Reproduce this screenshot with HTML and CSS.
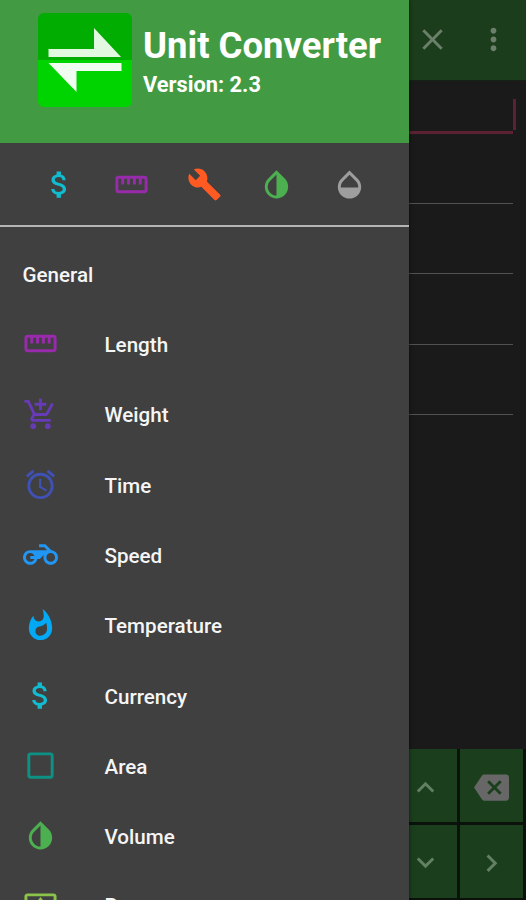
FILE: index.html
```html
<!DOCTYPE html>
<html lang="en">
<head>
<meta charset="utf-8">
<title>Unit Converter</title>
<link rel="stylesheet" href="styles.css">
</head>
<body>
<svg class="defs" aria-hidden="true">
  <symbol id="money" viewBox="0 0 24 24"><path d="M11.8 10.9c-2.27-.59-3-1.2-3-2.15 0-1.09 1.01-1.85 2.7-1.85 1.78 0 2.44.85 2.5 2.1h2.21c-.07-1.72-1.12-3.3-3.21-3.81V3h-3v2.16c-1.94.42-3.5 1.68-3.5 3.61 0 2.31 1.91 3.46 4.7 4.13 2.5.6 3 1.48 3 2.41 0 .69-.49 1.79-2.7 1.79-2.06 0-2.87-.92-2.98-2.1h-2.2c.12 2.19 1.76 3.42 3.68 3.83V21h3v-2.15c1.95-.37 3.5-1.5 3.5-3.55 0-2.84-2.43-3.81-4.7-4.4z"/></symbol>
  <symbol id="ruler" viewBox="0 0 24 24"><path d="M21 6H3c-1.1 0-2 .9-2 2v8c0 1.1.9 2 2 2h18c1.1 0 2-.9 2-2V8c0-1.1-.9-2-2-2zm0 10H3V8h2v4h2V8h2v4h2V8h2v4h2V8h2v4h2V8h2v8z"/></symbol>
  <symbol id="wrench" viewBox="0 0 24 24"><path d="M22.7 19l-9.1-9.1c.9-2.3.4-5-1.5-6.9-2-2-5-2.4-7.4-1.3L9 6 6 9 1.6 4.7C.4 7.1.9 10.1 2.9 12.1c1.9 1.9 4.6 2.4 6.9 1.5l9.1 9.1c.4.4 1 .4 1.4 0l2.3-2.3c.5-.4.5-1.1.1-1.4z"/></symbol>
  <symbol id="drop" viewBox="0 0 24 24"><path d="M17.66 7.93L12 2.27 6.34 7.93c-3.12 3.12-3.12 8.19 0 11.31C7.9 20.8 9.95 21.58 12 21.58c2.05 0 4.1-.78 5.66-2.34 3.12-3.12 3.12-8.19 0-11.31zM12 19.59c-1.6 0-3.11-.62-4.24-1.76C6.62 16.69 6 15.19 6 13.59s.62-3.11 1.76-4.24L12 5.1v14.49z"/></symbol>
  <symbol id="opacity" viewBox="0 0 24 24"><path d="M17.66 8L12 2.35 6.34 8C4.78 9.56 4 11.64 4 13.64s.78 4.11 2.34 5.67 3.61 2.35 5.66 2.35 4.1-.79 5.66-2.35S20 15.64 20 13.64 19.22 9.56 17.66 8zM6 14c.01-2 .62-3.27 1.76-4.4L12 5.27l4.24 4.38C17.38 10.77 17.99 12 18 14H6z"/></symbol>
  <symbol id="cart" viewBox="0 0 24 24"><path d="M11 9h2V6h3V4h-3V1h-2v3H8v2h3v3zm-4 9c-1.1 0-1.99.9-1.99 2S5.9 22 7 22s2-.9 2-2-.9-2-2-2zm10 0c-1.1 0-1.99.9-1.99 2s.89 2 1.99 2 2-.9 2-2-.9-2-2-2zm-9.83-3.25l.03-.12.9-1.63h7.45c.75 0 1.41-.41 1.75-1.03l3.86-7.01L19.42 4h-.01l-1.1 2-2.76 5H8.53l-.13-.27L6.16 6l-.95-2-.94-2H1v2h2l3.6 7.59-1.35 2.45c-.16.28-.25.61-.25.96 0 1.1.9 2 2 2h12v-2H7.42c-.13 0-.25-.11-.25-.25z"/></symbol>
  <symbol id="alarm" viewBox="0 0 24 24"><path d="M22 5.72l-4.6-3.86-1.29 1.53 4.6 3.86L22 5.72zM7.88 3.39L6.6 1.86 2 5.71l1.29 1.53 4.59-3.85zM12.5 8H11v6l4.75 2.85.75-1.23-4-2.37V8zM12 4c-4.97 0-9 4.03-9 9s4.02 9 9 9c4.97 0 9-4.03 9-9s-4.03-9-9-9zm0 16c-3.87 0-7-3.13-7-7s3.13-7 7-7 7 3.13 7 7-3.13 7-7 7z"/></symbol>
  <symbol id="bike" viewBox="0 0 24 24"><path d="M19.44 9.03L15.41 5H11v2h3.59l2 2H5c-2.8 0-5 2.2-5 5s2.2 5 5 5c2.46 0 4.45-1.69 4.9-4h1.65l2.77-2.77c-.21.54-.32 1.14-.32 1.77 0 2.8 2.2 5 5 5s5-2.2 5-5c0-2.65-1.97-4.77-4.56-4.97zM7.82 15C7.4 16.15 6.28 17 5 17c-1.63 0-3-1.37-3-3s1.37-3 3-3c1.28 0 2.4.85 2.82 2H5v2h2.82zM19 17c-1.66 0-3-1.34-3-3s1.34-3 3-3 3 1.34 3 3-1.34 3-3 3z"/></symbol>
  <symbol id="flame" viewBox="0 0 24 24"><path d="M13.5.67s.74 2.65.74 4.8c0 2.06-1.35 3.73-3.41 3.73-2.07 0-3.63-1.67-3.63-3.73l.03-.36C5.21 7.51 4 10.62 4 14c0 4.42 3.58 8 8 8s8-3.58 8-8C20 8.61 17.41 3.8 13.5.67zM11.71 19c-1.78 0-3.22-1.4-3.22-3.14 0-1.62 1.05-2.76 2.81-3.12 1.77-.36 3.6-1.21 4.62-2.58.39 1.29.59 2.65.59 4.04 0 2.65-2.15 4.8-4.8 4.8z"/></symbol>
  <symbol id="square" viewBox="0 0 24 24"><path d="M19 5v14H5V5h14m0-2H5c-1.1 0-2 .9-2 2v14c0 1.1.9 2 2 2h14c1.1 0 2-.9 2-2V5c0-1.1-.9-2-2-2z"/></symbol>
  <symbol id="overscan" viewBox="0 0 24 24"><path d="M12.01 5.5L10 8h4l-1.99-2.5zM18 10v4l2.5-1.99L18 10zM6 10l-2.5 2.01L6 14v-4zm8 6h-4l2.01 2.5L14 16zm7-13H3c-1.1 0-2 .9-2 2v14c0 1.1.9 2 2 2h18c1.1 0 2-.9 2-2V5c0-1.1-.9-2-2-2zm0 16.01H3V4.99h18v14.02z"/></symbol>
  <symbol id="close" viewBox="0 0 24 24"><path d="M19 6.41L17.59 5 12 10.59 6.41 5 5 6.41 10.59 12 5 17.59 6.41 19 12 13.41 17.59 19 19 17.59 13.41 12z"/></symbol>
  <symbol id="more" viewBox="0 0 24 24"><path d="M12 8c1.1 0 2-.9 2-2s-.9-2-2-2-2 .9-2 2 .9 2 2 2zm0 2c-1.1 0-2 .9-2 2s.9 2 2 2 2-.9 2-2-.9-2-2-2zm0 6c-1.1 0-2 .9-2 2s.9 2 2 2 2-.9 2-2-.9-2-2-2z"/></symbol>
  <symbol id="up" viewBox="0 0 24 24"><path d="M7.41 15.41L12 10.83l4.59 4.58L18 14l-6-6-6 6z"/></symbol>
  <symbol id="down" viewBox="0 0 24 24"><path d="M7.41 7.84L12 12.42l4.59-4.58L18 9.25l-6 6-6-6z"/></symbol>
  <symbol id="next" viewBox="0 0 24 24"><path d="M8.59 16.34l4.58-4.59-4.58-4.59L10 5.75l6 6-6 6z"/></symbol>
  <symbol id="backspace" viewBox="0 0 24 24"><path d="M22 3H7c-.69 0-1.23.35-1.59.88L0 12l5.41 8.11c.36.53.9.89 1.59.89h15c1.1 0 2-.9 2-2V5c0-1.1-.9-2-2-2zm-3 12.59L17.59 17 14 13.41 10.41 17 9 15.59 12.59 12 9 8.41 10.41 7 14 10.59 17.59 7 19 8.41 15.41 12 19 15.59z"/></symbol>
</svg>

<div class="app">
  <main class="converter">
    <header class="toolbar">
      <svg class="icon"><use href="#close"/></svg>
      <svg class="icon"><use href="#more"/></svg>
    </header>
    <div class="fields">
      <div class="field active"><span class="caret"></span></div>
      <div class="field"></div>
      <div class="field"></div>
      <div class="field"></div>
      <div class="field"></div>
    </div>
    <div class="keypad">
      <div class="key"><svg class="icon"><use href="#up"/></svg></div>
      <div class="key"><svg class="icon erase"><use href="#backspace"/></svg></div>
      <div class="key"><svg class="icon"><use href="#down"/></svg></div>
      <div class="key"><svg class="icon"><use href="#next"/></svg></div>
    </div>
  </main>

  <aside class="drawer">
    <header class="brand">
      <svg class="logo" viewBox="0 0 94 94">
        <defs><clipPath id="tile"><rect width="94" height="94" rx="6"/></clipPath></defs>
        <g clip-path="url(#tile)">
          <rect width="94" height="47" fill="#00ad00"/>
          <rect y="47" width="94" height="47" fill="#00d400"/>
        </g>
        <path fill="#e3f8e0" d="M10.5 36H56V15l27 29H10.500z"/>
        <path fill="#f0fdf0" d="M10.500 50H83.500v8H38.500v21z"/>
      </svg>
      <div class="names">
        <h1>Unit Converter</h1>
        <p>Version: 2.3</p>
      </div>
    </header>
    <nav class="tabs">
      <svg class="icon cyan"><use href="#money"/></svg>
      <svg class="icon purple"><use href="#ruler"/></svg>
      <svg class="icon orange"><use href="#wrench"/></svg>
      <svg class="icon green"><use href="#drop"/></svg>
      <svg class="icon grey"><use href="#opacity"/></svg>
    </nav>
    <h2>General</h2>
    <ul class="menu">
      <li><svg class="icon purple"><use href="#ruler"/></svg><span>Length</span></li>
      <li><svg class="icon violet"><use href="#cart"/></svg><span>Weight</span></li>
      <li><svg class="icon indigo"><use href="#alarm"/></svg><span>Time</span></li>
      <li><svg class="icon blue"><use href="#bike"/></svg><span>Speed</span></li>
      <li><svg class="icon sky"><use href="#flame"/></svg><span>Temperature</span></li>
      <li><svg class="icon cyan"><use href="#money"/></svg><span>Currency</span></li>
      <li><svg class="icon teal"><use href="#square"/></svg><span>Area</span></li>
      <li><svg class="icon green"><use href="#drop"/></svg><span>Volume</span></li>
      <li><svg class="icon lime"><use href="#overscan"/></svg><span>Pressure</span></li>
    </ul>
  </aside>
</div>
</body>
</html>
```
FILE: styles.css
```css
* { box-sizing: border-box; margin: 0; padding: 0; }

body {
  width: 526px;
  height: 900px;
  overflow: hidden;
  background: #1a1a1a;
  font-family: Roboto, "Liberation Sans", sans-serif;
}

.defs { position: absolute; width: 0; height: 0; }

.app { position: relative; width: 526px; height: 900px; overflow: hidden; }

.icon { display: block; flex: none; width: 35px; height: 35px; fill: currentColor; }

/* Converter screen, dimmed behind the drawer */
.converter { display: flex; flex-direction: column; height: 900px; }

.toolbar {
  display: flex;
  justify-content: flex-end;
  align-items: center;
  gap: 26px;
  height: 81px;
  padding: 0 15px 1px 0;
  background: #1b3d1c;
  border-bottom: 1px solid #142214;
  color: #6b7f6b;
}

.fields { flex: 1; padding: 0 13px; }
.field { height: 70.2px; border-bottom: 1.5px solid #515151; }
.field.active {
  display: flex;
  justify-content: flex-end;
  height: 53px;
  padding-top: 18px;
  border-bottom: 3px solid #5c2233;
}
.caret { width: 3px; height: 31px; margin-right: -3px; background: #5c2233; }

.keypad {
  display: grid;
  grid-template-columns: 63px 63px;
  grid-template-rows: 73px 73px;
  gap: 3px;
  justify-content: end;
  padding: 0 3px 2px 0;
  background: #0b120b;
}
.key {
  display: flex;
  justify-content: center;
  align-items: center;
  padding-top: 4px;
  background: #1b3f1c;
  color: #637f64;
}
.key .erase { color: #676767; }

/* Navigation drawer */
.drawer {
  position: absolute;
  top: 0;
  left: 0;
  width: 409px;
  height: 900px;
  overflow: hidden;
  background: #404040;
  color: #f5f5f5;
  box-shadow: 0 0 4px rgba(0, 0, 0, 0.6);
}

.brand { display: flex; height: 143px; padding: 13px 0 0 38px; background: #429b43; }
.logo { width: 94px; height: 94px; margin-right: 11px; }
.names { padding-top: 11px; color: #fff; white-space: nowrap; }
h1 { font-size: 36.5px; line-height: 44px; font-weight: 700; }
.names p { font-size: 21.8px; line-height: 34px; font-weight: 700; }

.tabs {
  display: flex;
  gap: 37.5px;
  height: 84px;
  padding: 24px 0 0 41.5px;
  border-bottom: 2px solid #b5b5b5;
}

h2 { padding-left: 22.5px; font-size: 20.6px; line-height: 96px; height: 82px; font-weight: 500; }

.menu { list-style: none; }
.menu li {
  display: flex;
  align-items: center;
  gap: 47px;
  height: 70.3px;
  padding-left: 22.500px;
  font-size: 20.6px;
  font-weight: 500;
}
.menu .icon { margin-bottom: 0.5px; }
.menu span { padding-top: 2px; }
.menu li:last-child span { padding-top: 0; padding-bottom: 1px; }

.cyan { color: #12bcd0; }
.purple { color: #982bab; }
.orange { color: #fe5a22; }
.green { color: #4caf50; }
.grey { color: #9e9e9e; }
.violet { color: #673ab7; }
.indigo { color: #3f51b5; }
.blue { color: #2196f3; }
.sky { color: #03a9f4; }
.teal { color: #0d9184; }
.lime { color: #8bc34a; }
```
